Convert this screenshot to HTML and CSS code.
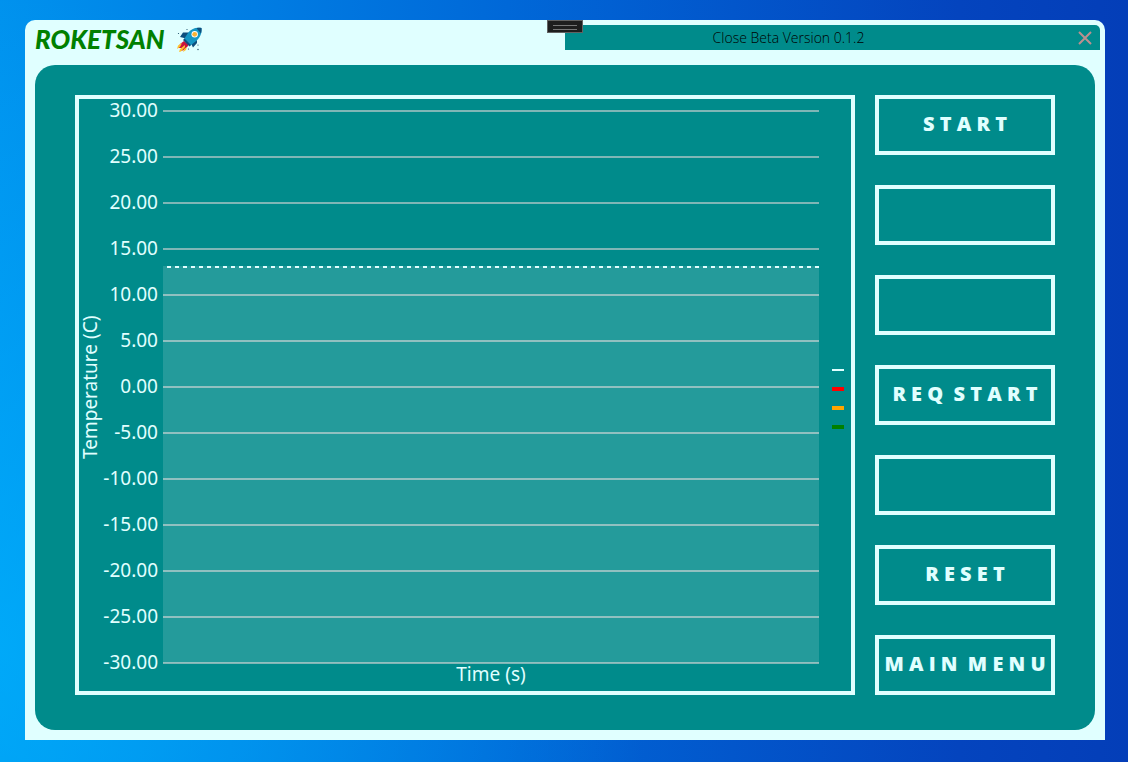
FILE: index.html
```html
<!DOCTYPE html>
<html lang="en">
<head>
<meta charset="utf-8">
<title>Roketsan</title>
<link rel="stylesheet" href="styles.css">
</head>
<body>
<main class="window">
  <div class="grip" aria-hidden="true"></div>
  <header class="header">
    <div class="brand">
      <h1 class="brand-name">ROKETSAN</h1>
      <svg class="rocket" viewBox="0 0 26 26" aria-hidden="true">
        <path fill="#c8143c" d="M7 14 3 17l-2 4 3 0 0 3 3-1 4-4 0-2z"/>
        <path fill="#ffc42e" d="M5 16 1 18.500 0 22l3-2zM8 18l-5 4-1 3 2-.5L8 20zM10 20l-3 2-1 3 3-2z"/>
        <path fill="#0e4f7d" d="M12 5.500 6 5.500 3 10l6 1.500zM20 13v3l-4 4.500-2.500-5z"/>
        <path fill="#1597c4" d="M24.500 1C18 0 14 2 11 6l-4 6 6.500 6.500 5-4c4-3 6.500-7 6-13.500z"/>
        <path fill="#0e4f7d" d="M24.500 1c-2-.4-4-.2-5 .2L24 6.500c.5-1.500.7-3.500.5-5.500zM7.500 11.500l6.500 6.500-1.500 1.500L6 13z"/>
        <circle cx="17.700" cy="7.300" r="3.200" fill="#fff"/>
        <circle cx="17.700" cy="7.300" r="2.400" fill="#f9b233"/>
        <g fill="#1a4a66"><circle cx="10" cy="2.500" r=".6"/><circle cx="1.500" cy="6.500" r=".6"/><circle cx="21" cy="18" r=".6"/><circle cx="21" cy="22.500" r=".7"/><circle cx="11.500" cy="22" r=".6"/></g>
      </svg>
    </div>
    <div class="titlebar">
      <span class="version">Close Beta Version 0.1.2</span>
      <button class="close" type="button" aria-label="Close">
        <svg viewBox="0 0 14 14" aria-hidden="true"><path d="M1 1l12 12M13 1L1 13"/></svg>
      </button>
    </div>
  </header>

  <section class="panel">
    <figure class="chart">
      <div class="y-title">Temperature (C)</div>
      <div class="plot">
        <div class="scale">
          <div class="band"></div>
          <div class="tick"><span>30.00</span></div>
          <div class="tick"><span>25.00</span></div>
          <div class="tick"><span>20.00</span></div>
          <div class="tick"><span>15.00</span></div>
          <div class="tick"><span>10.00</span></div>
          <div class="tick"><span>5.00</span></div>
          <div class="tick"><span>0.00</span></div>
          <div class="tick"><span>-5.00</span></div>
          <div class="tick"><span>-10.00</span></div>
          <div class="tick"><span>-15.00</span></div>
          <div class="tick"><span>-20.00</span></div>
          <div class="tick"><span>-25.00</span></div>
          <div class="tick"><span>-30.00</span></div>
        </div>
        <figcaption class="x-title">Time (s)</figcaption>
      </div>
      <div class="legend">
        <i class="key key-limit"></i>
        <i class="key key-red"></i>
        <i class="key key-orange"></i>
        <i class="key key-green"></i>
      </div>
    </figure>
    <nav class="actions">
      <button class="action" type="button">S T A R T</button>
      <button class="action" type="button" aria-label="Unassigned"></button>
      <button class="action" type="button" aria-label="Unassigned"></button>
      <button class="action" type="button">R E Q &nbsp;S T A R T</button>
      <button class="action" type="button" aria-label="Unassigned"></button>
      <button class="action" type="button">R E S E T</button>
      <button class="action" type="button">M A I N &nbsp;M E N U</button>
    </nav>
  </section>
</main>
</body>
</html>
```
FILE: styles.css
```css
:root {
  --teal: #008b8b;
  --ice: #e0ffff;
}

* { box-sizing: border-box; }

body {
  margin: 0;
  min-height: 100vh;
  padding: 20px 23px 22px 25px;
  display: flex;
  background:
    radial-gradient(circle at 0 85%, rgba(0, 184, 255, 0.6), rgba(0, 150, 255, 0) 50%),
    linear-gradient(90deg, #0092ee, #0068d8 45%, #0444be 85%, #043eb8);
  color: var(--ice);
  font-family: "Noto Sans", "Open Sans", sans-serif;
}

.window {
  position: relative;
  flex: 1;
  display: flex;
  flex-direction: column;
  padding: 5px 5px 10px 10px;
  background: var(--ice);
  border-radius: 10px 10px 0 0;
}

.grip {
  position: absolute;
  top: 0;
  left: 50%;
  width: 36px;
  height: 13px;
  margin-left: -18px;
  padding: 4px 5px;
  background: #1e1e1e;
  border: 1px solid #626262;
}

.grip::before {
  content: "";
  display: block;
  height: 3px;
  border: solid #777;
  border-width: 1px 0;
}

.header {
  display: flex;
  height: 40px;
}

.brand {
  flex: 1;
  display: flex;
  align-items: flex-start;
  gap: 12px;
}

.brand-name {
  margin: 0;
  color: #008000;
  font: italic 900 26px/28px Lato, sans-serif;
}

.rocket {
  width: 26px;
  height: 26px;
  margin-top: 2px;
}

.titlebar {
  flex: 0 0 535px;
  height: 25px;
  display: flex;
  align-items: center;
  padding: 0 8px 0 0;
  background: var(--teal);
  border-top-right-radius: 5px;
}

.version {
  flex: 1;
  padding-right: 66px;
  text-align: center;
  color: #000;
  font: 300 14px/24px "Open Sans", sans-serif;
}

.close {
  width: 14px;
  height: 14px;
  padding: 0;
  border: 0;
  background: none;
}

.close svg {
  display: block;
  fill: none;
  stroke: #bc8f8f;
  stroke-width: 2;
}

.panel {
  flex: 1;
  display: flex;
  gap: 20px;
  margin-right: 5px;
  padding: 30px 40px 35px;
  background: var(--teal);
  border-radius: 20px;
}

.chart {
  flex: 1;
  display: flex;
  margin: 0;
  border: 4px solid var(--ice);
  font-size: 19px;
}

.y-title {
  width: 22px;
  padding-top: 16px;
  writing-mode: vertical-rl;
  transform: rotate(180deg);
  text-align: center;
  line-height: 22px;
}

.plot {
  flex: 1;
  display: flex;
  flex-direction: column;
  padding-top: 11px;
}

.scale {
  position: relative;
  flex: 1;
  display: flex;
  flex-direction: column;
  justify-content: space-between;
}

.tick {
  display: flex;
  align-items: flex-end;
  gap: 5px;
  height: 2px;
}

.tick span {
  width: 57px;
  text-align: right;
  line-height: 4px;
}

.tick::after {
  content: "";
  flex: 1;
  height: 2px;
  background: rgba(211, 211, 211, 0.6);
}

.band {
  position: absolute;
  inset: 156px 0 1px 62px;
  background:
    repeating-linear-gradient(90deg, transparent 0 4px, var(--ice) 4px 8px) 0 0 / 100% 2px no-repeat,
    rgba(255, 255, 255, 0.14);
}

.x-title {
  padding: 0 0 7px 62px;
  text-align: center;
  line-height: 20px;
}

.legend {
  width: 32px;
  display: flex;
  flex-direction: column;
  align-items: center;
  justify-content: center;
  gap: 15px;
  padding: 7px 0 0 6px;
}

.key {
  width: 12px;
  height: 4px;
}

.key-limit { background: linear-gradient(var(--ice), var(--ice)) center / 100% 2px no-repeat; }
.key-red { background: #f00; }
.key-orange { background: #ffa500; }
.key-green { background: #008000; }

.actions {
  width: 180px;
  display: flex;
  flex-direction: column;
  justify-content: space-between;
}

.action {
  height: 60px;
  padding: 0 0 2px;
  border: 4px solid var(--ice);
  background: transparent;
  color: var(--ice);
  font: 800 20px/24px "Open Sans", sans-serif;
  white-space: nowrap;
}
```
